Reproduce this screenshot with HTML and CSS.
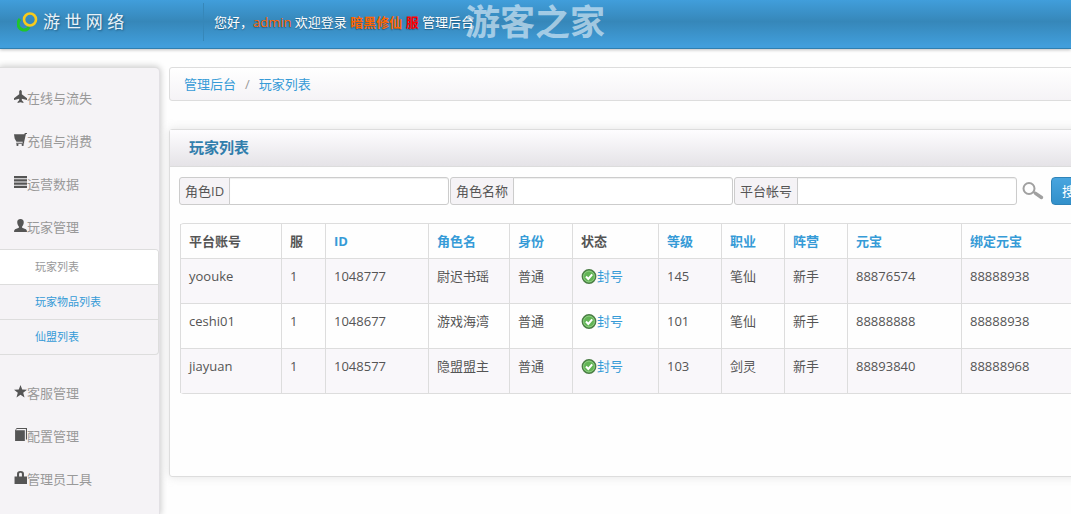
FILE: index.html
```html
<!DOCTYPE html>
<html lang="zh-CN">
<head>
    <meta charset="UTF-8">
    <meta name="viewport" content="width=device-width, initial-scale=1.0">
    <title>玩家列表</title>
    <link rel="stylesheet" href="styles.css">
</head>
<body>

<header class="navbar">
    <a class="brand" href="#">
        <svg class="brand-logo" width="21" height="20" viewBox="0 0 21 20" fill="none">
            <path d="M3 7C-.5 11 1 17 6 18c3 .4 5-1 6-3" stroke="#1fc52c" stroke-width="3"/>
            <circle cx="13" cy="7.500" r="6" stroke="#f8cb1c" stroke-width="2.600"/>
        </svg>
        <span>游 世 网 络</span>
    </a>
    <p class="welcome">您好，<span class="user">admin</span> 欢迎登录 <b class="game">暗黑修仙</b> <b class="server">服</b> 管理后台</p>
    <span class="watermark">游客之家</span>
</header>

<div class="page">
    <nav class="sidebar">
        <a class="menu-item" href="#">
            <svg class="icon" viewBox="0 0 12 12"><path d="M4.800 1.200Q6 -1.200 7.200 1.200V4L12 7.500V9.200L7.200 8V9.500L8.700 11V12L6 11.200 3.300 12V11L4.800 9.500V8L0 9.200V7.500L4.800 4z"/></svg>在线与流失
        </a>
        <a class="menu-item" href="#">
            <svg class="icon" viewBox="0 0 12 12"><path d="M0 1.200H9.500L10 0H12V1H11L9.300 8.500V10H2V9H8V8H2.300L.6 5z"/><circle cx="3.200" cy="11" r="1"/><circle cx="8" cy="11" r="1"/></svg>充值与消费
        </a>
        <a class="menu-item" href="#">
            <svg class="icon" viewBox="0 0 12 12"><path d="M0 0h12v2H0zM0 3h12v2H0zM0 6h12v2H0zM0 9h12v2H0z"/></svg>运营数据
        </a>
        <a class="menu-item" href="#">
            <svg class="icon" viewBox="0 0 12 12"><path d="M6 0C8 0 9.200 1.200 9 3.300 8.900 5 8.300 6 7.500 7V8L11 9.500Q12 10 12 12H0Q0 10 1 9.500L4.500 8V7C3.700 6 3.100 5 3 3.300 2.800 1.200 4 0 6 0z"/></svg>玩家管理
        </a>
        <ul class="submenu">
            <li class="active"><a href="#">玩家列表</a></li>
            <li><a href="#">玩家物品列表</a></li>
            <li><a href="#">仙盟列表</a></li>
        </ul>
        <a class="menu-item" href="#">
            <svg class="icon" viewBox="0 0 12 12"><path d="M6 0L7.600 4.200 12 4.400 8.500 7.100 9.700 11.500 6 9 2.300 11.500 3.500 7.100 0 4.400 4.400 4.200z"/></svg>客服管理
        </a>
        <a class="menu-item" href="#">
            <svg class="icon" viewBox="0 0 12 12"><path d="M2.500 0H12V10.500H11V1H2.500L1.800 2H10V12H1V2z"/></svg>配置管理
        </a>
        <a class="menu-item" href="#">
            <svg class="icon" viewBox="0 0 12 12"><path fill-rule="evenodd" d="M2.800 5V2.500Q2.800 0 6 0T9.200 2.500V5H12V12H.5V5zM4.700 5H7.300V2.700Q7.300 1.500 6 1.500T4.700 2.700z"/></svg>管理员工具
        </a>
    </nav>

    <main class="content">
        <div class="breadcrumb">
            <a href="#">管理后台</a><span class="divider">/</span><a href="#">玩家列表</a>
        </div>

        <section class="box">
            <h2 class="box-header">玩家列表</h2>
            <div class="box-content">
                <form class="search">
                    <div class="field">
                        <label for="role-id">角色ID</label>
                        <input id="role-id" type="text">
                    </div>
                    <div class="field">
                        <label for="role-name">角色名称</label>
                        <input id="role-name" type="text">
                    </div>
                    <div class="field">
                        <label for="account">平台帐号</label>
                        <input id="account" type="text">
                    </div>
                    <svg class="magnifier" width="22" height="18" viewBox="0 0 22 18" fill="none" stroke="#a0a0a0">
                        <circle cx="7" cy="6.500" r="5.500" stroke-width="2"/>
                        <path d="M11.500 10l2 1.500" stroke-width="2"/>
                        <path d="M13.500 11.300l6 4.200" stroke-width="3.400" stroke-linecap="round"/>
                    </svg>
                    <button class="btn" type="submit">搜索</button>
                </form>

                <table class="players">
                    <colgroup>
                        <col class="col-account">
                        <col class="col-server">
                        <col class="col-id">
                        <col class="col-name">
                        <col class="col-short">
                        <col class="col-status">
                        <col class="col-short">
                        <col class="col-short">
                        <col class="col-short">
                        <col class="col-gold">
                        <col>
                    </colgroup>
                    <thead>
                        <tr>
                            <th>平台账号</th>
                            <th>服</th>
                            <th><a href="#">ID</a></th>
                            <th><a href="#">角色名</a></th>
                            <th><a href="#">身份</a></th>
                            <th>状态</th>
                            <th><a href="#">等级</a></th>
                            <th><a href="#">职业</a></th>
                            <th><a href="#">阵营</a></th>
                            <th><a href="#">元宝</a></th>
                            <th><a href="#">绑定元宝</a></th>
                        </tr>
                    </thead>
                    <tbody>
                        <tr>
                            <td>yoouke</td>
                            <td>1</td>
                            <td>1048777</td>
                            <td>尉迟书瑶</td>
                            <td>普通</td>
                            <td><a class="ban" href="#"><svg class="check" viewBox="0 0 16 16"><circle cx="8" cy="8.500" r="6.700" fill="#62b455" stroke="#4b7d45" stroke-width="1.400"/><circle cx="8" cy="8.500" r="5.400" fill="none" stroke="#8fcf83"/><path d="M5 8.500l2.300 2.500 3.900-4.600" fill="none" stroke="#fff" stroke-width="2"/></svg>封号</a></td>
                            <td>145</td>
                            <td>笔仙</td>
                            <td>新手</td>
                            <td>88876574</td>
                            <td>88888938</td>
                        </tr>
                        <tr>
                            <td>ceshi01</td>
                            <td>1</td>
                            <td>1048677</td>
                            <td>游戏海湾</td>
                            <td>普通</td>
                            <td><a class="ban" href="#"><svg class="check" viewBox="0 0 16 16"><circle cx="8" cy="8.500" r="6.700" fill="#62b455" stroke="#4b7d45" stroke-width="1.400"/><circle cx="8" cy="8.500" r="5.400" fill="none" stroke="#8fcf83"/><path d="M5 8.500l2.300 2.500 3.900-4.600" fill="none" stroke="#fff" stroke-width="2"/></svg>封号</a></td>
                            <td>101</td>
                            <td>笔仙</td>
                            <td>新手</td>
                            <td>88888888</td>
                            <td>88888938</td>
                        </tr>
                        <tr>
                            <td>jiayuan</td>
                            <td>1</td>
                            <td>1048577</td>
                            <td>隐盟盟主</td>
                            <td>普通</td>
                            <td><a class="ban" href="#"><svg class="check" viewBox="0 0 16 16"><circle cx="8" cy="8.500" r="6.700" fill="#62b455" stroke="#4b7d45" stroke-width="1.400"/><circle cx="8" cy="8.500" r="5.400" fill="none" stroke="#8fcf83"/><path d="M5 8.500l2.300 2.500 3.900-4.600" fill="none" stroke="#fff" stroke-width="2"/></svg>封号</a></td>
                            <td>103</td>
                            <td>剑灵</td>
                            <td>新手</td>
                            <td>88893840</td>
                            <td>88888968</td>
                        </tr>
                    </tbody>
                </table>
            </div>
        </section>
    </main>
</div>

</body>
</html>
```

FILE: styles.css
```css
* {
    margin: 0;
    padding: 0;
    box-sizing: border-box;
}

body {
    font-family: "Open Sans", "Noto Sans CJK SC", sans-serif;
    font-size: 13px;
    line-height: 18px;
    color: #555;
    background-color: #fefefe;
    display: flex;
    flex-direction: column;
    min-height: 100vh;
    overflow-x: hidden;
}

a {
    color: #369bd7;
    text-decoration: none;
}

/* Top bar */
.navbar {
    position: relative;
    display: flex;
    align-items: center;
    height: 49px;
    padding-bottom: 4px;
    background: linear-gradient(#419edb, #3687b9 45%, #419edb 95%);
    border-bottom: 1px solid #2f7fb0;
    box-shadow: 0 1px 3px rgba(0, 0, 0, 0.25);
    color: #fff;
}

.brand {
    display: flex;
    align-items: center;
    gap: 5px;
    width: 204px;
    height: 38px;
    padding-left: 17px;
    border-right: 1px solid #3687b9;
    color: #e8f2f9;
    font-size: 17px;
    text-shadow: 1px 1px 2px #245f85;
}

.welcome {
    padding-left: 10px;
    text-shadow: 0 1px 1px #245f85;
    white-space: nowrap;
}

.user,
.game {
    color: #ff6600;
}

.server {
    color: #ff0000;
}

.watermark {
    position: absolute;
    left: 465px;
    top: 0;
    font-size: 35px;
    line-height: 44px;
    font-weight: bold;
    color: rgba(255, 255, 255, 0.55);
}

.page {
    flex: 1;
    display: flex;
    gap: 9px;
    padding-top: 18px;
}

/* Sidebar */
.sidebar {
    flex: 0 0 160px;
    padding-top: 9px;
    background-color: #f5f3f6;
    border-top: 1px solid #ddd;
    border-right: 1px solid #e2e0e4;
    border-top-right-radius: 5px;
    box-shadow: 0 0 6px 1px rgba(0, 0, 0, 0.2);
}

.menu-item {
    display: flex;
    align-items: center;
    height: 43px;
    padding: 0 0 2px 14px;
    color: #999;
}

.icon {
    width: 13px;
    height: 13px;
    margin-bottom: 3px;
    fill: #555;
}

.submenu {
    list-style: none;
    margin-bottom: 17px;
    border: 1px solid #ddd;
    border-left: none;
    border-radius: 0 4px 4px 0;
    font-size: 11px;
    overflow: hidden;
}

.submenu a {
    display: block;
    padding: 8px 35px;
}

.submenu li + li {
    border-top: 1px solid #ddd;
}

.submenu .active {
    background-color: #fff;
}

.submenu .active a {
    color: #999;
}

/* Content is wider than a small window, the rest is clipped */
.content {
    flex: 1 0 auto;
    min-width: 1000px;
}

.breadcrumb {
    display: flex;
    gap: 9px;
    margin-bottom: 28px;
    padding: 7px 14px;
    border: 1px solid #ddd;
    border-radius: 3px;
    background: linear-gradient(#fff, #f5f3f6);
}

.divider {
    color: #999;
}

.box {
    min-height: 348px;
    border: 1px solid #ddd;
    border-radius: 3px;
    box-shadow: 0 0 10px rgba(189, 189, 189, 0.4);
}

.box-header {
    padding: 8px 19px 10px;
    border-bottom: 1px solid #dcdcdc;
    background: linear-gradient(#fefdff, #e5e3e7);
    color: #317eac;
    font-size: 15px;
    line-height: 18px;
}

.box-content {
    padding: 10px 9px;
}

.search {
    display: flex;
    align-items: center;
    gap: 1px;
}

.field {
    display: flex;
    height: 28px;
}

.field label {
    padding: 4px 5px;
    border: 1px solid #ccc;
    border-radius: 3px 0 0 3px;
    background-color: #f5f3f6;
    white-space: nowrap;
}

.field input {
    width: 220px;
    margin-left: -1px;
    padding: 4px 6px;
    border: 1px solid #ccc;
    border-radius: 0 3px 3px 0;
    background-color: #fff;
    box-shadow: inset 0 1px 1px rgba(0, 0, 0, 0.07);
    color: #555;
    font: inherit;
}

.magnifier {
    margin: 0 6px 0 4px;
}

.btn {
    height: 28px;
    padding: 4px 10px;
    border: 1px solid #2f83b8;
    border-radius: 4px;
    background: linear-gradient(#48a5df, #3290ca);
    color: #fff;
    font: inherit;
    cursor: pointer;
}

/* Player table */
.players {
    width: 100%;
    margin: 18px 1px 0;
    table-layout: fixed;
    border: 1px solid #ddd;
    border-left: none;
    border-radius: 4px;
    border-spacing: 0;
}

.players th,
.players td {
    padding: 8px;
    border-left: 1px solid #ddd;
    text-align: left;
    vertical-align: top;
    white-space: nowrap;
}

.players td {
    height: 45px;
    border-top: 1px solid #ddd;
}

.players tbody tr:nth-child(odd) td {
    background-color: #f9f7fa;
}

.col-account {
    width: 101px;
}

.col-server {
    width: 44px;
}

.col-id {
    width: 103px;
}

.col-name {
    width: 81px;
}

.col-short {
    width: 63px;
}

.col-status {
    width: 86px;
}

.col-gold {
    width: 114px;
}

.ban {
    display: flex;
    align-items: center;
}

.check {
    width: 16px;
    height: 16px;
}
```
